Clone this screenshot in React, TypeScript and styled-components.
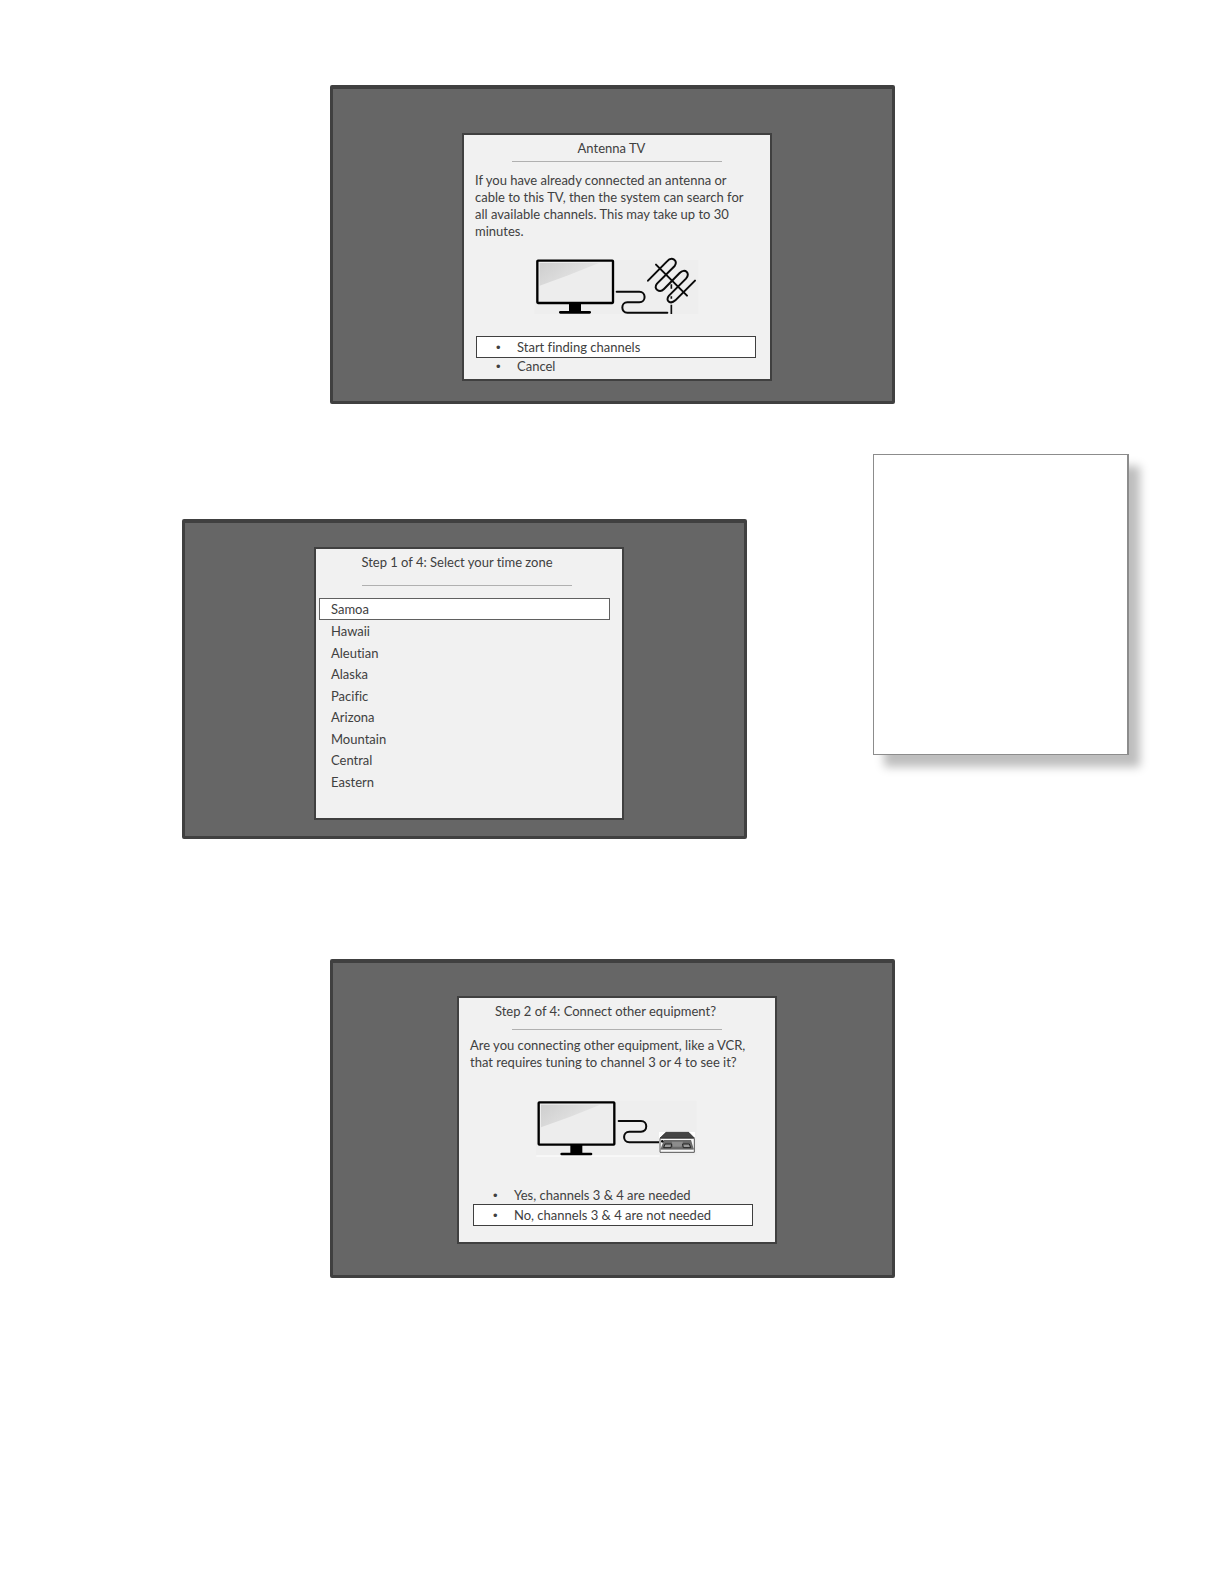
import React, { useState } from "react";
import styled, { createGlobalStyle } from "styled-components";

const GlobalStyle = createGlobalStyle`
  *, *::before, *::after { box-sizing: border-box; }
  body {
    margin: 0;
    background: #ffffff;
    color: #404040;
    font: 13px/17px Lato, "Open Sans", sans-serif;
    font-variant-ligatures: none;
  }
  button { font-variant-ligatures: none; }
`;

const Page = styled.main`
  display: flex;
  flex-direction: column;
  align-items: center;
  min-height: 100vh;
  padding: 85px 0 48px;
`;

const StepRow = styled.div`
  display: flex;
  align-items: flex-start;
  justify-content: center;
  gap: 126px;
  width: 100%;
  margin: 50px 0 120px;
  padding-left: 86px;
`;

const Screen = styled.section<{ $top: number; $bottom: number; $drop?: number }>`
  display: flex;
  justify-content: center;
  width: 100%;
  max-width: 565px;
  margin-top: ${(p) => p.$drop ?? 0}px;
  padding: ${(p) => p.$top}px 0 ${(p) => p.$bottom}px 9px;
  background: #666666;
  border: solid #404040;
  border-width: 4px 3px 3px;
  border-radius: 2px;
`;

const Dialog = styled.div<{ $width: number; $bottom: number }>`
  width: ${(p) => p.$width}px;
  padding: 5px 0 ${(p) => p.$bottom}px;
  background: #f1f1f1;
  border: 2px solid #404040;
`;

const Header = styled.header<{ $gap: number; $trail?: number }>`
  display: flex;
  flex-direction: column;
  align-items: center;
  gap: ${(p) => p.$gap}px;
  padding-right: ${(p) => p.$trail ?? 0}px;
`;

const Title = styled.h2<{ $trail: number }>`
  margin: 0;
  padding-right: ${(p) => p.$trail}px;
  font: inherit;
  font-variant-ligatures: none;
`;

const Rule = styled.hr`
  width: 210px;
  height: 1px;
  margin: 0;
  border: 0;
  background: #b0b0b0;
`;

const Message = styled.p<{ $gap: number }>`
  margin: ${(p) => p.$gap}px 0 0;
  padding: 0 11px;
`;

const Picture = styled.svg<{ $top: number; $bottom: number }>`
  display: block;
  margin: ${(p) => p.$top}px auto ${(p) => p.$bottom}px;
`;

const Choices = styled.ul<{ $inset: number }>`
  margin: 0 12px 0 ${(p) => p.$inset}px;
  padding: 0;
  list-style: none;
`;

const Choice = styled.button<{ $selected: boolean }>`
  display: flex;
  align-items: center;
  gap: 16px;
  width: 100%;
  max-width: 280px;
  height: ${(p) => (p.$selected ? 22 : 17)}px;
  padding: 0 0 0 ${(p) => (p.$selected ? 19 : 20)}px;
  border: ${(p) => (p.$selected ? "1px solid #404040" : "0")};
  background: ${(p) => (p.$selected ? "#ffffff" : "transparent")};
  color: inherit;
  font: inherit;
  text-align: left;
`;

const Bullet = styled.span`
  flex: none;
  width: 5px;
  font-family: "Liberation Sans", sans-serif;
`;

const Zones = styled.ul`
  display: grid;
  grid-template-rows: 22px repeat(8, 1fr);
  height: 194px;
  margin: 12px 12px 0 3px;
  padding: 0;
  list-style: none;
`;

const Zone = styled.button<{ $selected: boolean }>`
  width: 100%;
  max-width: 291px;
  height: 100%;
  padding: ${(p) => (p.$selected ? "0 0 0 11px" : "2px 0 0 12px")};
  border: ${(p) => (p.$selected ? "1px solid #606060" : "0")};
  background: ${(p) => (p.$selected ? "#ffffff" : "transparent")};
  color: inherit;
  font: inherit;
  text-align: left;
`;

const Note = styled.aside`
  flex: none;
  width: 256px;
  height: 301px;
  background: #ffffff;
  border: 1px solid #8c8c8c;
  border-right-width: 2px;
  box-shadow: 11px 12px 9px #bebebe;
`;

function Television({ x, y, id }: { x: number; y: number; id: string }) {
  return (
    <g transform={`translate(${x} ${y})`}>
      <defs>
        <linearGradient id={id} x1="0" y1="0" x2="1" y2="0.5">
          <stop offset="0" stopColor="#cecece" />
          <stop offset="1" stopColor="#e8e8e8" />
        </linearGradient>
      </defs>
      <rect x="37" y="32" width="227" height="127" rx="2" fill="#ededed" stroke="#000" strokeWidth="7" />
      <path d="M44 39H222L130 76L44 107Z" fill={`url(#${id})`} />
      <path d="M132 160h36v24h-36z" />
      <path d="M106 187h88" stroke="#000" strokeWidth="8" strokeLinecap="round" />
    </g>
  );
}

function AntennaPicture() {
  return (
    <Picture $top={10} $bottom={16} width="180" height="70" viewBox="6 0 540 210" role="img" aria-label="TV and antenna">
      <path d="M34 30H520V192H28Z" fill="#eeeeee" />
      <Television x={0} y={0} id="antenna-glare" />
      <g fill="none" stroke="#0a0a0a" strokeWidth="6" strokeLinecap="round" strokeLinejoin="round">
        <path d="M275 125H343C364 125 364 157 343 157H307C287 157 287 188 307 188H427" />
        <path d="M369 92L426 34C440 18 461 31 449 48L396 101C383 117 404 130 417 117L464 69C479 53 498 70 483 86L432 137C419 153 437 164 451 151L510 92" />
        <path d="M393 44L486 137" />
      </g>
      <path d="M439 103V116M439 139V146M439 164V192" stroke="#111" strokeWidth="5" />
    </Picture>
  );
}

function RecorderPicture() {
  return (
    <Picture $top={19} $bottom={22} width="180" height="75" viewBox="6 0 540 225" role="img" aria-label="TV and VCR">
      <path d="M34 32H514V196H34Z" fill="#eeeeee" />
      <path d="M34 198H404" stroke="#fff" strokeWidth="3" />
      <Television x={4} y={5} id="recorder-glare" />
      <path
        d="M281 93H348C369 93 369 125 348 125H313C292 125 292 157 313 157H401"
        fill="none"
        stroke="#0a0a0a"
        strokeWidth="6"
        strokeLinecap="round"
      />
      <path d="M402 126H510V188H402Z" fill="#fff" />
      <path d="M423 127H491L508 144H405Z" fill="#444" stroke="#222" strokeWidth="2" />
      <path d="M405 145H508V187H405Z" fill="#f8f8f8" stroke="#555" strokeWidth="3" />
      <path d="M417 150H498L506 176H407Z" fill="#6a6a6a" />
      <path d="M440 155H474L470 170H444Z" fill="#8c8c8c" />
      <path d="M420 162H440L438 173H416ZM473 162H493L497 173H475Z" fill="#999" stroke="#222" strokeWidth="3" />
      <path d="M407 177H506" stroke="#444" strokeWidth="3" />
      <circle cx="412" cy="154" r="4" fill="#111" />
    </Picture>
  );
}

function ChoiceList({ items, initial, inset }: { items: string[]; initial: number; inset: number }) {
  const [selected, setSelected] = useState(initial);
  return (
    <Choices $inset={inset}>
      {items.map((item, index) => (
        <li key={item}>
          <Choice
            type="button"
            $selected={index === selected}
            aria-pressed={index === selected}
            onClick={() => setSelected(index)}
          >
            <Bullet>•</Bullet>
            {item}
          </Choice>
        </li>
      ))}
    </Choices>
  );
}

const zones = ["Samoa", "Hawaii", "Aleutian", "Alaska", "Pacific", "Arizona", "Mountain", "Central", "Eastern"];

function ZoneList() {
  const [selected, setSelected] = useState("Samoa");
  return (
    <Zones>
      {zones.map((zone) => (
        <li key={zone}>
          <Zone
            type="button"
            $selected={zone === selected}
            aria-pressed={zone === selected}
            onClick={() => setSelected(zone)}
          >
            {zone}
          </Zone>
        </li>
      ))}
    </Zones>
  );
}

export default function App() {
  return (
    <>
      <GlobalStyle />
      <Page>
        <Screen $top={44} $bottom={20}>
          <Dialog $width={310} $bottom={4}>
            <Header $gap={4}>
              <Title $trail={11}>Antenna TV</Title>
              <Rule />
            </Header>
            <Message $gap={10}>
              If you have already connected an antenna or cable to this TV, then the system can search for all available
              channels. This may take up to 30 minutes.
            </Message>
            <AntennaPicture />
            <ChoiceList items={["Start finding channels", "Cancel"]} initial={0} inset={12} />
          </Dialog>
        </Screen>

        <StepRow>
          <Screen $top={24} $bottom={16} $drop={65}>
            <Dialog $width={310} $bottom={26}>
              <Header $gap={14} $trail={4}>
                <Title $trail={20}>Step 1 of 4: Select your time zone</Title>
                <Rule />
              </Header>
              <ZoneList />
            </Dialog>
          </Screen>
          <Note />
        </StepRow>

        <Screen $top={33} $bottom={31}>
          <Dialog $width={320} $bottom={16}>
            <Header $gap={9}>
              <Title $trail={23}>Step 2 of 4: Connect other equipment?</Title>
              <Rule />
            </Header>
            <Message $gap={7}>
              Are you connecting other equipment, like a VCR, that requires tuning to channel 3 or 4 to see it?
            </Message>
            <RecorderPicture />
            <ChoiceList
              items={["Yes, channels 3 & 4 are needed", "No, channels 3 & 4 are not needed"]}
              initial={1}
              inset={14}
            />
          </Dialog>
        </Screen>
      </Page>
    </>
  );
}
